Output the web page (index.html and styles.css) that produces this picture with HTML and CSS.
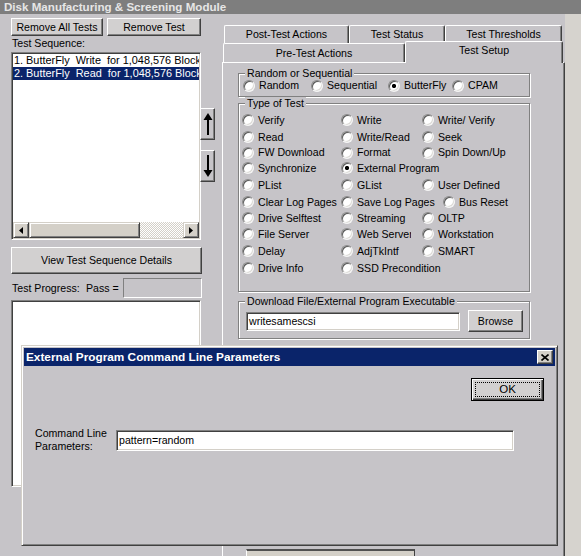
FILE: index.html
```html
<!DOCTYPE html>
<html>
<head>
<meta charset="utf-8">
<title>Disk Manufacturing &amp; Screening Module</title>
<link rel="stylesheet" href="styles.css">
</head>
<body>
<div class="screen">
  <div class="apptitle">Disk Manufacturing &amp; Screening Module</div>
  <div class="main">
    <div class="leftpane">
      <div class="toprow">
        <button class="btn btn-removeall">Remove All Tests</button>
        <button class="btn btn-remove">Remove Test</button>
      </div>
      <div class="caption">Test Sequence:</div>
      <div class="seqrow">
        <div class="listbox seqlist">
          <div class="items">
            <div class="item">1. ButterFly  Write  for 1,048,576 Blocks</div>
            <div class="item selected">2. ButterFly  Read  for 1,048,576 Blocks</div>
          </div>
          <div class="hscroll">
            <div class="sbtn"><svg width="4" height="7" viewBox="0 0 4 7"><polygon points="4,0 0,3.5 4,7" fill="#000"/></svg></div>
            <div class="thumb"></div>
            <div class="track"></div>
            <div class="sbtn"><svg width="4" height="7" viewBox="0 0 4 7"><polygon points="0,0 4,3.5 0,7" fill="#000"/></svg></div>
          </div>
        </div>
        <div class="movebtns">
          <button class="btn move"><svg width="10" height="22" viewBox="0 0 10 22"><polygon points="5,0 9.5,7 0.5,7" fill="#000"/><rect x="4" y="5" width="2" height="17" fill="#000"/></svg></button>
          <button class="btn move"><svg width="10" height="22" viewBox="0 0 10 22"><rect x="4" y="0" width="2" height="17" fill="#000"/><polygon points="5,22 9.5,15 0.5,15" fill="#000"/></svg></button>
        </div>
      </div>
      <button class="btn viewbtn">View Test Sequence Details</button>
      <div class="progrow">
        <span class="prog-label">Test Progress:</span>
        <span class="pass-label">Pass =</span>
        <div class="passbox"></div>
      </div>
      <div class="listbox proglist"></div>
    </div>

    <div class="rightpane">
      <div class="tabrow back">
        <div class="tab t-post">Post-Test Actions</div>
        <div class="tab t-status">Test Status</div>
        <div class="tab t-thresh">Test Thresholds</div>
      </div>
      <div class="tabrow front">
        <div class="tab t-pre">Pre-Test Actions</div>
        <div class="tab t-setup active">Test Setup</div>
      </div>
      <div class="tabpanel">
        <fieldset class="group g-mode">
          <legend>Random or Sequential</legend>
          <div class="moderow">
            <div class="radio m1"><span class="dot"></span><span>Random</span></div>
            <div class="radio m2"><span class="dot"></span><span>Sequential</span></div>
            <div class="radio m3"><span class="dot on"></span><span>ButterFly</span></div>
            <div class="radio m4"><span class="dot"></span><span>CPAM</span></div>
          </div>
        </fieldset>

        <fieldset class="group g-type">
          <legend>Type of Test</legend>
          <div class="typegrid">
            <div class="radio"><span class="dot"></span><span>Verify</span></div>
            <div class="radio"><span class="dot"></span><span>Write</span></div>
            <div class="radio"><span class="dot"></span><span>Write/ Verify</span></div>

            <div class="radio"><span class="dot"></span><span>Read</span></div>
            <div class="radio"><span class="dot"></span><span>Write/Read</span></div>
            <div class="radio"><span class="dot"></span><span>Seek</span></div>

            <div class="radio"><span class="dot"></span><span>FW Download</span></div>
            <div class="radio"><span class="dot"></span><span>Format</span></div>
            <div class="radio"><span class="dot"></span><span>Spin Down/Up</span></div>

            <div class="radio"><span class="dot"></span><span>Synchronize</span></div>
            <div class="radio"><span class="dot on"></span><span>External Program</span></div>
            <div class="cell-empty"></div>

            <div class="radio"><span class="dot"></span><span>PList</span></div>
            <div class="radio"><span class="dot"></span><span>GList</span></div>
            <div class="radio"><span class="dot"></span><span>User Defined</span></div>

            <div class="radio"><span class="dot"></span><span>Clear Log Pages</span></div>
            <div class="radio"><span class="dot"></span><span>Save Log Pages</span></div>
            <div class="radio busreset"><span class="dot"></span><span>Bus Reset</span></div>

            <div class="radio"><span class="dot"></span><span>Drive Selftest</span></div>
            <div class="radio"><span class="dot"></span><span>Streaming</span></div>
            <div class="radio"><span class="dot"></span><span>OLTP</span></div>

            <div class="radio"><span class="dot"></span><span>File Server</span></div>
            <div class="radio"><span class="dot"></span><span class="clip">Web Server</span></div>
            <div class="radio"><span class="dot"></span><span>Workstation</span></div>

            <div class="radio"><span class="dot"></span><span>Delay</span></div>
            <div class="radio"><span class="dot"></span><span>AdjTkIntf</span></div>
            <div class="radio"><span class="dot"></span><span>SMART</span></div>

            <div class="radio"><span class="dot"></span><span>Drive Info</span></div>
            <div class="radio"><span class="dot"></span><span>SSD Precondition</span></div>
            <div class="cell-empty"></div>
          </div>
        </fieldset>

        <fieldset class="group g-file">
          <legend>Download File/External Program Executable</legend>
          <div class="filerow">
            <div class="textfield filefield">writesamescsi</div>
            <button class="btn browse">Browse</button>
          </div>
        </fieldset>

        <div class="hidden-stub"></div>
      </div>
    </div>
  </div>

  <div class="dialog">
    <div class="dlgtitle">
      <span class="dlgtitle-text">External Program Command Line Parameters</span>
      <button class="closebtn"><svg width="8" height="7" viewBox="0 0 8 7"><path d="M0.5 0.5 L7.5 6.5 M7.5 0.5 L0.5 6.5" stroke="#000" stroke-width="1.6"/></svg></button>
    </div>
    <div class="dlgbody">
      <div class="okrow">
        <button class="okbtn"><span class="focusrect">OK</span></button>
      </div>
      <div class="paramrow">
        <div class="paramlabel">Command Line<br>Parameters:</div>
        <div class="textfield paramfield">pattern=random</div>
      </div>
    </div>
  </div>
</div>
</body>
</html>
```

FILE: styles.css
```css
* { box-sizing: border-box; }

html, body {
  margin: 0;
  padding: 0;
}

body {
  width: 581px;
  height: 556px;
  overflow: hidden;
  background: #d6d3ce;
  font-family: "Liberation Sans", Arial, sans-serif;
  font-size: 10.6px;
  line-height: 13px;
  color: #000;
}

.screen {
  position: relative;
  width: 581px;
  height: 556px;
}

.apptitle {
  height: 14px;
  background: #7e7e7e;
  color: #e6e6e6;
  font-weight: bold;
  font-size: 11.6px;
  line-height: 14px;
  padding-left: 4px;
  white-space: nowrap;
}

.main {
  display: flex;
  width: 565px;
  height: 542px;
  background: #c6c4c8;
}

/* ---------- generic controls ---------- */
.btn {
  font: inherit;
  color: #000;
  background: #d2d0d0;
  border: 1px solid;
  border-color: #fff #404040 #404040 #fff;
  box-shadow: inset -1px -1px 0 #808080;
  padding: 0;
  margin: 0;
  display: flex;
  align-items: center;
  justify-content: center;
  white-space: nowrap;
}

.listbox {
  background: #fff;
  border: 1px solid;
  border-color: #808080 #fff #fff #808080;
  box-shadow: inset 1px 1px 0 #404040, inset -1px -1px 0 #d4d0c8;
  padding: 1px;
}

.textfield {
  background: #fff;
  border: 1px solid;
  border-color: #808080 #fff #fff #808080;
  box-shadow: inset 1px 1px 0 #404040, inset -1px -1px 0 #d4d0c8;
  padding: 0 2px;
  white-space: nowrap;
  overflow: hidden;
  display: flex;
  align-items: center;
}

/* ---------- left pane ---------- */
.leftpane {
  width: 222px;
  flex: none;
  padding: 4px 0 0 11px;
}

.toprow {
  display: flex;
  gap: 4px;
  height: 18px;
}

.btn-removeall { width: 92px; }
.btn-remove { width: 94px; }

.caption {
  height: 16px;
  line-height: 14px;
  padding-left: 1px;
}

.seqrow {
  display: flex;
  height: 188px;
}

.seqlist {
  width: 190px;
  height: 188px;
  display: flex;
  flex-direction: column;
}

.items {
  flex: 1;
  overflow: hidden;
}

.item {
  height: 13px;
  line-height: 13px;
  padding-left: 1px;
  font-size: 10.9px;
  white-space: pre;
  overflow: hidden;
}

.item.selected {
  background: #0a246a;
  color: #fff;
}

.hscroll {
  display: flex;
  height: 16px;
}

.sbtn {
  width: 16px;
  flex: none;
  background: #d4d0c8;
  border: 1px solid;
  border-color: #d4d0c8 #404040 #404040 #d4d0c8;
  box-shadow: inset 1px 1px 0 #fff, inset -1px -1px 0 #808080;
  display: flex;
  align-items: center;
  justify-content: center;
}

.thumb {
  width: 111px;
  flex: none;
  background: #d4d0c8;
  border: 1px solid;
  border-color: #d4d0c8 #404040 #404040 #d4d0c8;
  box-shadow: inset 1px 1px 0 #fff, inset -1px -1px 0 #808080;
}

.track {
  flex: 1;
  background-color: #fff;
  background-image: repeating-conic-gradient(#d4d0c8 0 25%, #fff 0 50%);
  background-size: 2px 2px;
}

.movebtns {
  display: flex;
  flex-direction: column;
  gap: 10px;
  padding-top: 56px;
  margin-left: -1px;
}

.move {
  width: 15px;
  height: 32px;
  background: #c6c4c8;
}

.viewbtn {
  width: 191px;
  height: 27px;
  margin-top: 7px;
}

.progrow {
  display: flex;
  align-items: center;
  height: 20px;
  margin-top: 4px;
}

.prog-label {
  width: 75px;
  padding-left: 1px;
  white-space: nowrap;
}

.pass-label {
  width: 37px;
  white-space: nowrap;
}

.passbox {
  width: 79px;
  height: 20px;
  background: #c6c4c8;
  border: 1px solid;
  border-color: #808080 #fff #fff #808080;
}

.proglist {
  width: 190px;
  height: 187px;
  margin-top: 2px;
}

/* ---------- right pane / tabs ---------- */
.rightpane {
  width: 343px;
  flex: none;
  display: flex;
  flex-direction: column;
  padding-top: 11px;
}

.tabrow {
  display: flex;
}

.tabrow.back {
  height: 18px;
  padding-left: 2px;
}

.tabrow.front {
  height: 19px;
  padding-left: 1px;
  align-items: flex-end;
  position: relative;
  z-index: 1;
}

.tab {
  height: 100%;
  background: #c6c4c8;
  border-top: 1px solid #fff;
  border-left: 1px solid #fff;
  border-right: 1px solid #404040;
  box-shadow: inset -1px 0 0 #808080;
  border-radius: 2px 2px 0 0;
  text-align: center;
  line-height: 17px;
  white-space: nowrap;
}

.t-post { width: 125px; }
.t-status { width: 96px; }
.t-thresh { width: 117px; }

.t-pre {
  width: 182px;
  height: 19px;
  line-height: 18px;
}

.t-setup {
  width: 158px;
  height: 22px;
  margin-bottom: -1px;
  line-height: 17px;
}

.tabpanel {
  flex: 1;
  background: #c6c4c8;
  border-top: 1px solid #fff;
  border-left: 1px solid #fff;
  border-right: 1px solid #404040;
  box-shadow: inset -1px 0 0 #808080;
  padding-left: 15px;
}

/* ---------- group boxes ---------- */
.group {
  margin: 0;
  padding: 0;
  min-width: 0;
  width: 292px;
  border: 1px solid #808080;
  box-shadow: inset 1px 1px 0 #fff, 1px 1px 0 #fff;
}

.group legend {
  margin-left: 6px;
  padding: 0 2px;
  line-height: 12px;
  background: #c6c4c8;
  white-space: nowrap;
}

.g-mode {
  margin-top: 4px;
  padding-bottom: 4px;
}

.g-type {
  padding-top: 2px;
  padding-bottom: 15px;
}

.g-file {
  margin-top: 3px;
  padding-top: 3px;
  padding-bottom: 6px;
}

.moderow {
  display: flex;
  height: 13px;
  padding-left: 4px;
}

.m1 { width: 68px; }
.m2 { width: 77px; }
.m3 { width: 64px; }

.radio {
  display: flex;
  align-items: center;
  gap: 4px;
  white-space: nowrap;
}

.dot {
  flex: none;
  width: 12px;
  height: 12px;
  border-radius: 50%;
  background: #fff;
  border: 1px solid;
  border-color: #8a8a8a #f4f4f4 #f4f4f4 #8a8a8a;
  box-shadow: inset 1px 1px 0 #5a5a5a, inset -1px -1px 0 #dcdad6;
}

.dot.on {
  background: radial-gradient(circle, #000 0 1.8px, #fff 2.4px);
}

.typegrid {
  display: grid;
  grid-template-columns: 99px 81px 1fr;
  grid-template-rows: 18px 16px 15px 16px 18px 16px 16px 16px 18px 16px;
  padding-left: 3px;
}

.busreset {
  margin-left: 21px;
}

.clip {
  width: 54px;
  overflow: hidden;
}

.filerow {
  display: flex;
  align-items: center;
  gap: 8px;
  height: 22px;
  padding-left: 7px;
}

.filefield {
  width: 214px;
  height: 19px;
}

.browse {
  width: 55px;
  height: 22px;
}

.hidden-stub {
  margin: 210px 0 0 8px;
  width: 169px;
  height: 10px;
  background: #d4d0c8;
  border-top: 2px solid #505050;
  border-left: 1px solid #fff;
  border-right: 1px solid #404040;
}

/* ---------- dialog ---------- */
.dialog {
  position: absolute;
  left: 21px;
  top: 345px;
  width: 537px;
  height: 201px;
  background: #c6c4c8;
  border: 1px solid;
  border-color: #d4d0c8 #404040 #404040 #d4d0c8;
  box-shadow: inset 1px 1px 0 #fff, inset -1px -1px 0 #808080;
  padding: 2px;
  z-index: 5;
}

.dlgtitle {
  height: 18px;
  background: #0a246a;
  color: #fff;
  display: flex;
  align-items: center;
  justify-content: space-between;
  padding: 0 2px 0 2px;
}

.dlgtitle-text {
  font-weight: bold;
  font-size: 11.8px;
  white-space: nowrap;
}

.closebtn {
  width: 16px;
  height: 14px;
  padding: 0;
  margin: 0;
  background: #d4d0c8;
  border: 1px solid;
  border-color: #fff #404040 #404040 #fff;
  box-shadow: inset -1px -1px 0 #808080;
  display: flex;
  align-items: center;
  justify-content: center;
}

.dlgbody {
  padding: 12px 11px 0 11px;
}

.okrow {
  display: flex;
  justify-content: flex-end;
}

.okbtn {
  font: inherit;
  color: #000;
  width: 73px;
  height: 23px;
  padding: 3px;
  margin: 0;
  background: #d2d0d0;
  border: 1px solid #000;
  box-shadow: inset 1px 1px 0 #fff, inset -1px -1px 0 #404040, inset -2px -2px 0 #808080;
  display: flex;
}

.focusrect {
  flex: 1;
  border: 1px dotted #000;
  display: flex;
  align-items: center;
  justify-content: center;
  font-size: 11.5px;
}

.paramrow {
  display: flex;
  margin-top: 26px;
}

.paramlabel {
  width: 81px;
  line-height: 13px;
}

.paramfield {
  width: 398px;
  height: 21px;
  margin-top: 3px;
}
```
